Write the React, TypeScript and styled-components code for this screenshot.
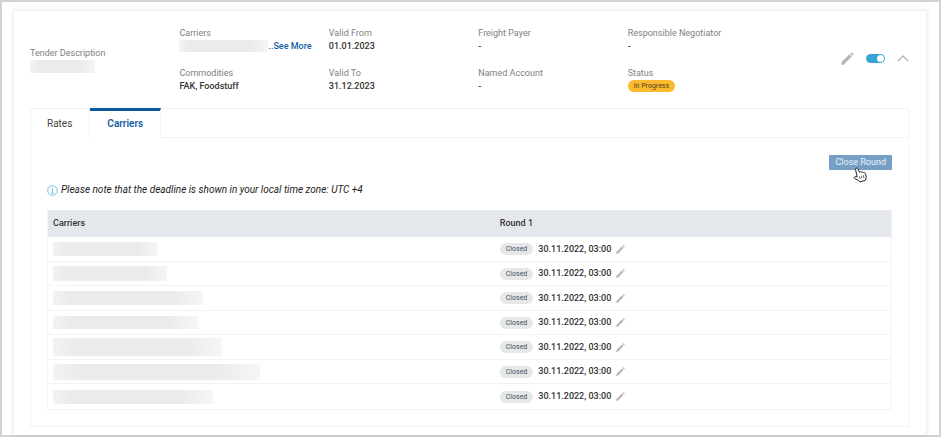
import React from "react";
import styled, { createGlobalStyle } from "styled-components";

const GlobalStyle = createGlobalStyle`
  *, *::before, *::after { box-sizing: border-box; }
  body {
    margin: 0;
    background: #fff;
    color: #333;
    font: 9px/13px Roboto, "Liberation Sans", sans-serif;
  }
  button, input { font: inherit; color: inherit; margin: 0; }
`;

const Frame = styled.div`
  min-height: 100vh;
  display: flex;
  border: 2px solid #cfd2d6;
  padding: 8px 12px 0 11px;
`;

const Card = styled.main`
  flex: 1;
  min-width: 0;
  padding: 0 17px 8px 16px;
  border: 1px solid #f3f3f3;
  border-bottom: 0;
  box-shadow: 0 0 4px rgba(0, 0, 0, 0.1);
`;

const Summary = styled.header`
  display: grid;
  grid-template-columns: repeat(5, 17%) 1fr;
  align-items: center;
  height: 97px;
`;

const FieldStack = styled.div`
  display: grid;
  gap: 14px;
`;

const Field = styled.dl`
  margin: 0;
`;

const Label = styled.dt`
  color: #808080;
`;

const Value = styled.dd`
  display: flex;
  align-items: center;
  height: 13px;
  margin: 0;
  font-weight: 500;
  white-space: nowrap;
`;

const Redacted = styled.span<{ $width: number; $height: number }>`
  display: block;
  flex: none;
  width: ${(p) => p.$width}px;
  height: ${(p) => p.$height}px;
  background: linear-gradient(90deg, #f3f3f3, #ebebeb 12%, #ebebeb 80%, #f6f6f6);
`;

const MoreLink = styled.a`
  color: #1162a8;
  text-decoration: none;
`;

const Status = styled.span`
  height: 12px;
  padding: 0 6px;
  border-radius: 6px;
  background: #fdb92e;
  color: #4d431f;
  font-size: 7px;
  line-height: 12px;
  font-weight: 400;
`;

const Actions = styled.div`
  display: flex;
  align-items: center;
  justify-content: flex-end;
  gap: 12px;
  padding-bottom: 3px;
`;

const IconButton = styled.button`
  display: flex;
  padding: 0;
  border: 0;
  background: none;
  color: #b5b5b5;
  cursor: pointer;
`;

const Toggle = styled.input`
  appearance: none;
  display: flex;
  justify-content: flex-end;
  width: 19px;
  height: 9px;
  border: 1px solid #35a3d5;
  border-radius: 5px;
  background: #35a3d5;
  cursor: pointer;

  &::before {
    content: "";
    width: 7px;
    height: 7px;
    border-radius: 50%;
    background: #fff;
  }

  &:not(:checked) {
    justify-content: flex-start;
    border-color: #b5b5b5;
    background: #b5b5b5;
  }
`;

const Panel = styled.section`
  border: 1px solid #f3f3f3;
`;

const TabList = styled.div`
  display: flex;
  height: 29px;
  border-bottom: 1px solid #f3f3f3;
`;

const Tab = styled.button<{ $active?: boolean }>`
  height: ${(p) => (p.$active ? 30 : 29)}px;
  margin-top: ${(p) => (p.$active ? -1 : 0)}px;
  padding: ${(p) => (p.$active ? "0 17px 2px" : "0 17px 0 16px")};
  border: 0;
  border-right: 1px solid #f3f3f3;
  border-top: ${(p) => (p.$active ? "3px solid #0b5a9f" : "0")};
  background: #fff;
  color: ${(p) => (p.$active ? "#1162a8" : "#444")};
  font-size: 10px;
  line-height: 13px;
  font-weight: ${(p) => (p.$active ? 600 : 400)};
  cursor: pointer;
`;

const PanelBody = styled.div`
  padding: 17px 16px 16px;
`;

const Toolbar = styled.div`
  display: flex;
  justify-content: flex-end;
`;

const CloseButton = styled.button`
  position: relative;
  height: 15px;
  padding: 0 6px;
  border: 0;
  border-radius: 1px;
  background: #769fc6;
  color: #e9f1f8;
  line-height: 15px;
  cursor: pointer;
`;

const Pointer = styled.svg`
  position: absolute;
  top: 12px;
  left: 24px;
`;

const Note = styled.p`
  display: flex;
  align-items: center;
  gap: 3px;
  margin: 13px 0;
  color: #222;
  font-size: 10px;
  line-height: 14px;
  font-style: italic;
`;

const Table = styled.table`
  width: 100%;
  border: 1px solid #f3f3f3;
  border-top: 0;
  border-spacing: 0;
  table-layout: fixed;
`;

const HeadCell = styled.th`
  height: 27px;
  padding: 0 5px;
  background: #e4e7ec;
  color: #333;
  font-weight: 500;
  text-align: left;

  &:first-child { width: 53%; }
`;

const Row = styled.tr`
  height: 25px;

  &:nth-child(even) { height: 24px; }
  &:not(:last-child) td { border-bottom: 1px solid #f3f3f3; }
`;

const Cell = styled.td`
  padding: 0 5px;
`;

const Deadline = styled.div`
  display: flex;
  align-items: center;
  gap: 5px;
  font-weight: 500;
`;

const Closed = styled.span`
  height: 12px;
  padding: 0 6px;
  border-radius: 6px;
  background: #e6e7e8;
  color: #435466;
  font-size: 7px;
  line-height: 12px;
  font-weight: 400;
`;

const Pencil = ({ size }: { size: number }) => (
  <svg width={size} height={size} viewBox="0 0 14 14" fill="currentColor" aria-hidden="true">
    <path d="M.4 13.6v-2.5L9.2 2.4l2.4 2.4-8.7 8.8zM10 1.6l.9-.9q.5-.5 1 0l1.4 1.4q.5.5 0 1l-.9.9z" />
  </svg>
);

const Chevron = () => (
  <svg width="12" height="8" viewBox="0 0 12 8" fill="none" stroke="currentColor" strokeWidth="1.4" aria-hidden="true">
    <path d="M1 7l5-5 5 5" />
  </svg>
);

const Info = () => (
  <svg width="11" height="11" viewBox="0 0 11 11" fill="none" stroke="#4cb0df" strokeWidth="0.8" aria-hidden="true">
    <circle cx="5.5" cy="5.5" r="4.8" />
    <path d="M4.4 4.6h1.2v3.6M4.3 8.2h2.5M5.4 2.5v1" />
  </svg>
);

const Hand = () => (
  <Pointer width="14" height="16" viewBox="0 0 14 16" fill="#fff" stroke="#222" strokeWidth="1" strokeLinejoin="round" aria-hidden="true">
    <path d="M3.1 1.2c.8-.5 1.6 0 1.9.8l1.4 3.2c.5-.6 1.5-.6 1.9.1.6-.5 1.5-.4 1.9.3.9-.4 1.8 0 2.1.9l.8 2.4c.3 1.1.1 2-.3 3l-.4 1.3-5.4 1.8-1.2-1.3-4.1-2.2c-.9-.6-.6-1.8.5-1.9l2 .2L2.6 2.9c-.2-.7 0-1.3.5-1.7z" />
    <path d="M6.3 9.3l.7 2.7M8.3 8.7l.7 2.7M10.2 8.1l.7 2.7" fill="none" strokeWidth=".7" />
  </Pointer>
);

const fieldGroups = [
  [["Valid From", "01.01.2023"], ["Valid To", "31.12.2023"]],
  [["Freight Payer", "-"], ["Named Account", "-"]],
];

const carriers = [
  { width: 105, height: 14 },
  { width: 114, height: 15 },
  { width: 150, height: 14 },
  { width: 145, height: 13 },
  { width: 169, height: 18 },
  { width: 207, height: 16 },
  { width: 160, height: 14 },
];

export default function App() {
  return (
    <>
      <GlobalStyle />
      <Frame>
        <Card>
          <Summary>
            <Field>
              <Label>Tender Description</Label>
              <Value><Redacted $width={65} $height={13} /></Value>
            </Field>
            <FieldStack>
              <Field>
                <Label>Carriers</Label>
                <Value>
                  <Redacted $width={89} $height={12} />
                  <MoreLink href="#carriers">..See More</MoreLink>
                </Value>
              </Field>
              <Field>
                <Label>Commodities</Label>
                <Value>FAK, Foodstuff</Value>
              </Field>
            </FieldStack>
            {fieldGroups.map((group) => (
              <FieldStack key={group[0][0]}>
                {group.map(([label, value]) => (
                  <Field key={label}>
                    <Label>{label}</Label>
                    <Value>{value}</Value>
                  </Field>
                ))}
              </FieldStack>
            ))}
            <FieldStack>
              <Field>
                <Label>Responsible Negotiator</Label>
                <Value>-</Value>
              </Field>
              <Field>
                <Label>Status</Label>
                <Value><Status>In Progress</Status></Value>
              </Field>
            </FieldStack>
            <Actions>
              <IconButton aria-label="Edit tender"><Pencil size={13} /></IconButton>
              <Toggle type="checkbox" role="switch" aria-label="Tender active" defaultChecked />
              <IconButton aria-label="Collapse"><Chevron /></IconButton>
            </Actions>
          </Summary>

          <Panel>
            <TabList role="tablist">
              <Tab role="tab" aria-selected={false}>Rates</Tab>
              <Tab role="tab" aria-selected $active>Carriers</Tab>
            </TabList>
            <PanelBody id="carriers" role="tabpanel">
              <Toolbar>
                <CloseButton>Close Round<Hand /></CloseButton>
              </Toolbar>
              <Note>
                <Info />
                Please note that the deadline is shown in your local time zone: UTC +4
              </Note>
              <Table>
                <thead>
                  <tr>
                    <HeadCell scope="col">Carriers</HeadCell>
                    <HeadCell scope="col">Round 1</HeadCell>
                  </tr>
                </thead>
                <tbody>
                  {carriers.map((carrier, index) => (
                    <Row key={index}>
                      <Cell><Redacted $width={carrier.width} $height={carrier.height} /></Cell>
                      <Cell>
                        <Deadline>
                          <Closed>Closed</Closed>
                          <time dateTime="2022-11-30T03:00">30.11.2022, 03:00</time>
                          <IconButton aria-label="Edit deadline"><Pencil size={9} /></IconButton>
                        </Deadline>
                      </Cell>
                    </Row>
                  ))}
                </tbody>
              </Table>
            </PanelBody>
          </Panel>
        </Card>
      </Frame>
    </>
  );
}
